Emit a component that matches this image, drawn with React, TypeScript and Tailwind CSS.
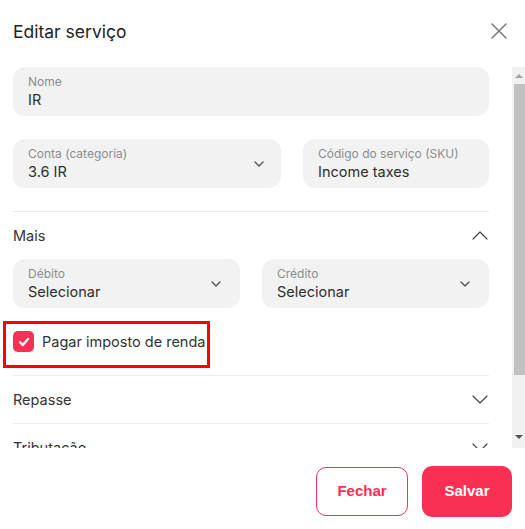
import { FC, ReactNode } from 'react';

const Chevron: FC<{ up?: boolean; small?: boolean }> = ({ up, small }) => {
    const w = small ? 10 : 16;
    const h = small ? 6 : 9;
    return (
        <svg width={w} height={h} viewBox={`0 0 ${w} ${h}`} fill="none" className="shrink-0">
            <path
                d={up ? `M1 ${h - 1} L${w / 2} 1 L${w - 1} ${h - 1}` : `M1 1 L${w / 2} ${h - 1} L${w - 1} 1`}
                stroke={small ? '#555' : '#444'}
                strokeWidth={small ? 1.4 : 1.2}
                strokeLinecap="round"
                strokeLinejoin="round"
            />
        </svg>
    );
};

const Field: FC<{ label: string; value: string; select?: boolean; chevronPad?: string }> = ({
    label,
    value,
    select,
    chevronPad = 'pr-[17px]',
}) => (
    <div className={`h-[49px] rounded-[12px] bg-[#f2f2f2] pl-[15px] ${chevronPad} flex items-center justify-between`}>
        <div className="flex flex-col">
            <span className="text-[12px] leading-[16px] text-[#8d8d8d]">{label}</span>
            <span className="text-[14.5px] leading-[19px] text-[#2e2e2e]">{value}</span>
        </div>
        {select && <Chevron small />}
    </div>
);

const Section: FC<{ title: string; open?: boolean; children?: ReactNode; last?: boolean }> = ({
    title,
    open,
    children,
    last,
}) => (
    <div className={last ? '' : 'border-b border-[#ececec]'}>
        <div className="h-[47px] flex items-center justify-between pr-[1px]">
            <span className="text-[14.5px] text-[#333]">{title}</span>
            <Chevron up={open} />
        </div>
        {children}
    </div>
);

// classic scrollbar, drawn so it shows the same in headless
const Scrollbar: FC = () => (
    <div className="w-[15px] h-full bg-[#f1f1f1] flex flex-col shrink-0">
        <div className="h-[17px] flex items-center justify-center pr-[1px]">
            <div className="w-0 h-0 border-l-[4px] border-r-[4px] border-b-[4px] border-l-transparent border-r-transparent border-b-[#a3a3a3]" />
        </div>
        <div className="ml-[2px] w-[11px] h-[291px] bg-[#c1c1c1]" />
        <div className="flex-1" />
        <div className="h-[17px] flex items-start justify-center pt-[4px] pr-[1px]">
            <div className="w-0 h-0 border-l-[4px] border-r-[4px] border-t-[4px] border-l-transparent border-r-transparent border-t-[#505050]" />
        </div>
    </div>
);

export default function App() {
    return (
        <div className="w-[525px] h-[529px] bg-white overflow-hidden font-['Inter',sans-serif]">
            <div className="h-[67px] flex items-center justify-between pl-[13px] pr-[18px] pb-[3px]">
                <h1 className="text-[17.5px] text-[#222]">Editar serviço</h1>
                <svg width="16" height="16" viewBox="0 0 16 16" fill="none" className="mb-[2px]">
                    <path d="M1 1 L15 15 M15 1 L1 15" stroke="#777" strokeWidth="1.5" strokeLinecap="round" />
                </svg>
            </div>

            <div className="h-[381px] w-[527px] flex">
                <div className="flex-1 overflow-hidden">
                    <div className="pl-[13px] w-[489px] pb-[20px]">
                        <Field label="Nome" value="IR" />
                        <div className="grid grid-cols-[268px_1fr] gap-[22px] mt-[23px]">
                            <Field label="Conta (categoria)" value="3.6 IR" select />
                            <Field label="Código do serviço (SKU)" value="Income taxes" />
                        </div>
                        <div className="border-b border-[#ececec] mt-[23px]" />
                        <Section title="Mais" open>
                            <div className="grid grid-cols-2 gap-[22px]">
                                <Field label="Débito" value="Selecionar" select chevronPad="pr-[19px]" />
                                <Field label="Crédito" value="Selecionar" select chevronPad="pr-[19px]" />
                            </div>
                            <div className="relative h-[67px] flex items-center gap-[8px]">
                                <div className="w-[21px] h-[21px] rounded-[5px] bg-[#f93054] flex items-center justify-center">
                                    <svg width="12" height="10" viewBox="0 0 12 10" fill="none">
                                        <path d="M2 5.2 L4.8 8 L10 2" stroke="white" strokeWidth="2.4" strokeLinecap="round" strokeLinejoin="round" />
                                    </svg>
                                </div>
                                <span className="text-[14.5px] text-[#333]">Pagar imposto de renda</span>
                                <div className="absolute left-[-10px] top-[13px] w-[207px] h-[47px] border-[3px] border-[#ff0000]" />
                            </div>
                        </Section>
                        <Section title="Repasse" />
                        <Section title="Tributação" last />
                    </div>
                </div>
                <Scrollbar />
            </div>

            <div className="flex justify-end items-center gap-[14px] pr-[13px] mt-[18px]">
                <button className="w-[92px] h-[49px] rounded-[10px] border border-[#f93054] text-[#f93054] font-bold text-[15px] font-['Liberation_Sans',sans-serif]">
                    Fechar
                </button>
                <button className="w-[90px] h-[51px] rounded-[10px] bg-[#f93054] text-white font-bold text-[15px] font-['Liberation_Sans',sans-serif]">
                    Salvar
                </button>
            </div>
        </div>
    );
}
